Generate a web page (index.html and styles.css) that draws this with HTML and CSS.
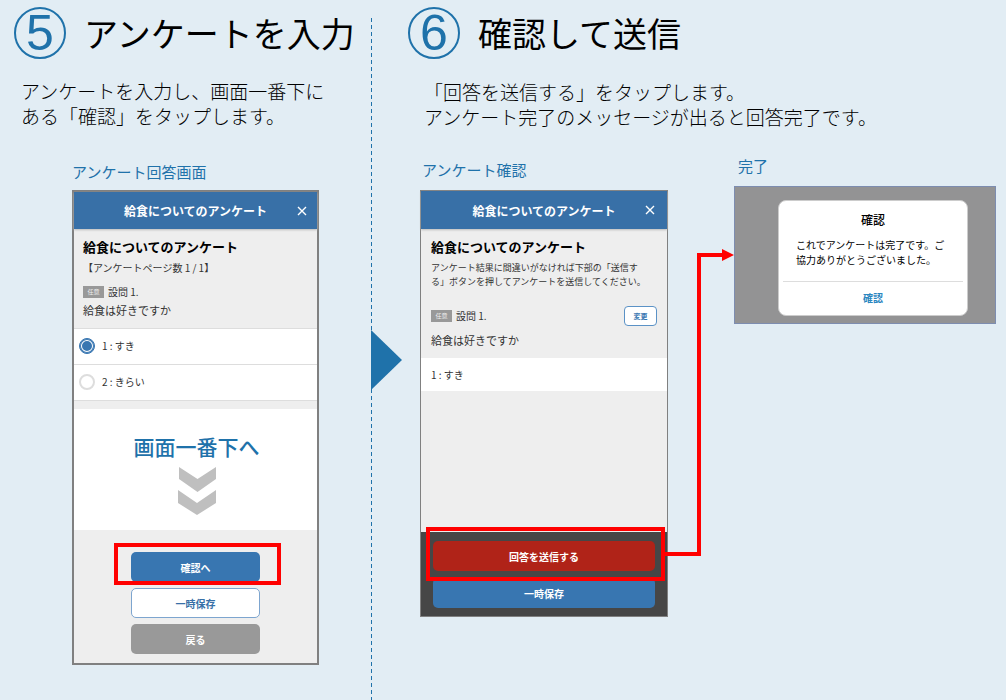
FILE: index.html
```html
<!DOCTYPE html>
<html lang="ja">
<head>
    <meta charset="UTF-8">
    <meta name="viewport" content="width=device-width, initial-scale=1.0">
    <title>アンケートの回答方法</title>
    <link rel="stylesheet" href="styles.css">
</head>
<body>
    <main class="guide">
        <section class="step step-input">
            <header class="step-header">
                <span class="step-number">5</span>
                <h1>アンケートを入力</h1>
            </header>
            <p class="step-text">アンケートを入力し、画面一番下に<br>ある「確認」をタップします。</p>

            <div class="screen">
                <h2 class="screen-label">アンケート回答画面</h2>
                <form class="phone">
                    <div class="phone-bar">
                        <span>給食についてのアンケート</span>
                        <button type="button" class="close" aria-label="閉じる">
                            <svg width="10" height="10" viewBox="0 0 10 10"><path d="M1 1L9 9M9 1L1 9"/></svg>
                        </button>
                    </div>
                    <div class="intro">
                        <h3>給食についてのアンケート</h3>
                        <p class="page-count">【アンケートページ数 1 / 1】</p>
                        <p class="question-no"><span class="badge">任意</span>設問 1.</p>
                        <p class="question">給食は好きですか</p>
                    </div>
                    <div class="options">
                        <label><input type="radio" name="lunch" checked>1 : すき</label>
                        <label><input type="radio" name="lunch">2 : きらい</label>
                    </div>
                    <div class="scroll-down">
                        <p>画面一番下へ</p>
                        <svg width="38" height="48" viewBox="0 0 38 48">
                            <polygon points="1,0 19.5,12 38,0 38,12 19.5,25 1,12"/>
                            <polygon points="0,23 19,36 38,23 38,36 19,48 0,36"/>
                        </svg>
                    </div>
                    <div class="actions">
                        <div class="marked">
                            <button type="button" class="btn btn-blue">確認へ</button>
                        </div>
                        <button type="button" class="btn btn-white">一時保存</button>
                        <button type="button" class="btn btn-gray">戻る</button>
                    </div>
                </form>
            </div>
        </section>

        <section class="step step-send">
            <svg class="next" width="31" height="60" viewBox="0 0 31 60"><polygon points="0,0 31,30 0,60"/></svg>
            <header class="step-header">
                <span class="step-number">6</span>
                <h1>確認して送信</h1>
            </header>
            <p class="step-text">「回答を送信する」をタップします。<br>アンケート完了のメッセージが出ると回答完了です。</p>

            <div class="flow">
                <div class="screen">
                    <h2 class="screen-label">アンケート確認</h2>
                    <form class="phone">
                        <div class="phone-bar">
                            <span>給食についてのアンケート</span>
                            <button type="button" class="close" aria-label="閉じる">
                                <svg width="10" height="10" viewBox="0 0 10 10"><path d="M1 1L9 9M9 1L1 9"/></svg>
                            </button>
                        </div>
                        <div class="intro">
                            <h3>給食についてのアンケート</h3>
                            <p class="note">アンケート結果に間違いがなければ下部の「送信す<br>る」ボタンを押してアンケートを送信してください。</p>
                            <div class="question-row">
                                <p class="question-no"><span class="badge">任意</span>設問 1.</p>
                                <button type="button" class="change">変更</button>
                            </div>
                            <p class="question">給食は好きですか</p>
                        </div>
                        <p class="answer">1 : すき</p>
                        <div class="send-bar">
                            <div class="marked">
                                <button type="button" class="btn btn-red">回答を送信する</button>
                            </div>
                            <button type="button" class="btn btn-blue">一時保存</button>
                        </div>
                    </form>
                </div>
                <div class="done">
                    <h2 class="screen-label">完了</h2>
                    <div class="backdrop">
                        <div class="dialog" role="dialog" aria-labelledby="done-title">
                            <h3 id="done-title">確認</h3>
                            <p>これでアンケートは完了です。ご<br>協力ありがとうございました。</p>
                            <button type="button">確認</button>
                        </div>
                    </div>
                </div>
                <!-- 送信ボタンから完了画面への矢印 -->
                <svg class="arrow" width="71" height="308" viewBox="0 0 71 308">
                    <path d="M0 305H36V6H60"/>
                    <polygon points="59,0 71,6 59,12"/>
                </svg>
            </div>
        </section>
    </main>
</body>
</html>
```
FILE: styles.css
```css
* {
    box-sizing: border-box;
}
body {
    margin: 0;
    background-color: #e2edf4;
    color: #000;
    font-family: "Noto Sans CJK JP", sans-serif;
}
h1, h2, h3, p {
    margin: 0;
}
button {
    padding: 0;
    font-family: inherit;
    cursor: pointer;
}
.guide {
    display: grid;
    grid-template-columns: 371px 1fr;
    min-height: 100vh;
}
.step {
    padding-top: 6px;
}
.step-input {
    padding-left: 14px;
}
.step-send {
    position: relative;
    padding-left: 37px;
}
/* 手順の区切りの破線 */
.step-send::before {
    content: "";
    position: absolute;
    top: 18px;
    bottom: 0;
    left: 0;
    width: 1px;
    background: repeating-linear-gradient(#1f72aa 0 4px, transparent 4px 7px);
}
.next {
    position: absolute;
    top: 330px;
    left: 0;
    fill: #1f72aa;
}

/* 見出し */
.step-header {
    display: flex;
    align-items: center;
    gap: 18px;
    height: 53px;
}
.step-number {
    width: 52px;
    height: 52px;
    border: 2px solid #1f72aa;
    border-radius: 50%;
    color: #1f72aa;
    font-family: "Liberation Sans", sans-serif;
    font-size: 50px;
    line-height: 48px;
    text-align: center;
}
h1 {
    font-size: 34px;
    font-weight: 400;
    line-height: 52px;
    white-space: nowrap;
}
.step-text {
    margin-top: 19px;
    padding-left: 7px;
    font-size: 19px;
    font-weight: 300;
    line-height: 25px;
    white-space: nowrap;
}
.step-send .step-text {
    margin-top: 20px;
    padding-left: 16px;
}
.screen-label {
    height: 27px;
    color: #1f72aa;
    font-size: 15px;
    font-weight: 400;
    line-height: 18px;
}

/* スマホ画面 */
.screen {
    width: 247px;
}
.step-input .screen {
    margin: 35px 0 0 58px;
}
.phone {
    border: 2px solid #808080;
    background-color: #eee;
    color: #333;
}
.phone-bar {
    position: relative;
    height: 37px;
    background-color: #3870a7;
    box-shadow: 0 1px 2px #bbb;
    color: #fff;
    font-size: 12px;
    font-weight: 700;
    line-height: 37px;
    text-align: center;
}
.close {
    position: absolute;
    top: 14px;
    right: 10px;
    display: flex;
    border: none;
    background: none;
}
.close svg {
    fill: none;
    stroke: #fff;
    stroke-width: 1.4;
}
.intro {
    padding: 8px 9px;
}
.intro h3 {
    color: #000;
    font-size: 13px;
    font-weight: 700;
    line-height: 20px;
}
.page-count {
    font-size: 10px;
    line-height: 22px;
}
.question-no {
    display: flex;
    align-items: center;
    gap: 4px;
    margin-top: 4px;
    font-size: 10px;
    line-height: 18px;
}
.badge {
    width: 21px;
    height: 12px;
    background-color: #999;
    color: #eee;
    font-size: 6px;
    line-height: 12px;
    text-align: center;
}
.question {
    font-size: 11px;
    line-height: 19px;
}
.options {
    border-top: 1px solid #ddd;
    background-color: #fff;
}
.options label {
    display: flex;
    align-items: center;
    gap: 7px;
    height: 36px;
    padding: 0 0 2px 5px;
    border-bottom: 1px solid #ddd;
    font-size: 10px;
}
.options input {
    appearance: none;
    width: 16px;
    height: 16px;
    margin: 0;
    border: 2px solid #ddd;
    border-radius: 50%;
    background-color: #fff;
}
.options input:checked {
    border: 1px solid #3876b1;
    background-color: #3876b1;
    box-shadow: inset 0 0 0 1px #3876b1, inset 0 0 0 2px #fff;
}
.scroll-down {
    display: flex;
    flex-direction: column;
    align-items: center;
    height: 121px;
    margin-top: 8px;
    padding: 22px 0 0 2px;
    background-color: #fff;
}
.scroll-down p {
    color: #1f72aa;
    font-size: 21px;
    font-weight: 500;
    line-height: 30px;
}
.scroll-down svg {
    margin-top: 6px;
    fill: #bfbfbf;
}
.actions {
    display: flex;
    flex-direction: column;
    gap: 6px;
    padding: 22px 57px 9px;
}
.btn {
    display: block;
    width: 100%;
    height: 30px;
    border: none;
    border-radius: 5px;
    color: #fff;
    font-size: 10px;
    font-weight: 700;
}
.btn-blue {
    background-color: #3876b1;
}
.btn-white {
    border: 1px solid #7da5cf;
    background-color: #fff;
    color: #3870a7;
}
.btn-gray {
    background-color: #999;
}
.btn-red {
    background-color: #b02318;
}
/* 押すボタンを囲む赤枠 */
.marked {
    position: relative;
}
.marked::after {
    content: "";
    position: absolute;
    inset: -9px -21px -3px -17px;
    border: 4px solid #f00;
    pointer-events: none;
}

/* 確認画面 */
.flow {
    position: relative;
    display: flex;
    align-items: flex-start;
    gap: 66px;
    margin-top: 28px;
    padding: 0 10px 0 12px;
}
.flow .screen {
    flex: none;
    width: 248px;
    padding-top: 4px;
}
.flow .screen-label {
    height: 29px;
    padding-left: 2px;
}
.flow .phone {
    border-width: 1px;
}
.flow .phone-bar {
    height: 38px;
    line-height: 39px;
}
.flow .close {
    right: 12px;
}
.flow .intro {
    padding: 8px 10px;
}
.note {
    margin-top: 4px;
    font-size: 9px;
    line-height: 14px;
    white-space: nowrap;
}
.question-row {
    display: flex;
    align-items: center;
    justify-content: space-between;
    margin-top: 17px;
}
.question-row .question-no {
    margin: 0;
}
.change {
    width: 33px;
    height: 20px;
    border: 1px solid #5b92c6;
    border-radius: 4px;
    background-color: #fff;
    color: #3876b1;
    font-size: 7px;
    font-weight: 700;
}
.question-row + .question {
    margin-top: 5px;
}
.answer {
    height: 33px;
    padding-left: 10px;
    background-color: #fff;
    font-size: 10px;
    line-height: 33px;
}
.send-bar {
    display: flex;
    flex-direction: column;
    gap: 7px;
    margin-top: 141px;
    padding: 9px 12px 8px;
    background-color: #464646;
}
.send-bar .marked::after {
    inset: -14px -10px -10px -7px;
}

/* 完了画面 */
.done {
    flex: 1;
}
.done .screen-label {
    padding-left: 4px;
}
.backdrop {
    height: 138px;
    padding: 13px 27px 0 43px;
    border: 1px solid #7d8db0;
    background-color: #939394;
}
.dialog {
    height: 116px;
    padding: 10px 4px 0;
    border: 1px solid #ccc;
    border-radius: 8px;
    background-color: #fff;
    text-align: center;
}
.dialog h3 {
    font-size: 12px;
    font-weight: 500;
    line-height: 18px;
}
.dialog p {
    padding: 8px 0 14px 13px;
    font-size: 10px;
    line-height: 15px;
    text-align: left;
    white-space: nowrap;
}
.dialog button {
    width: 100%;
    height: 32px;
    border: none;
    border-top: 1px solid #ddd;
    background: none;
    color: #2a86bf;
    font-size: 10px;
    font-weight: 700;
}
.arrow {
    position: absolute;
    top: 92px;
    left: 255px;
}
.arrow path {
    fill: none;
    stroke: #f00;
    stroke-width: 4;
}
.arrow polygon {
    fill: #f00;
}
```
